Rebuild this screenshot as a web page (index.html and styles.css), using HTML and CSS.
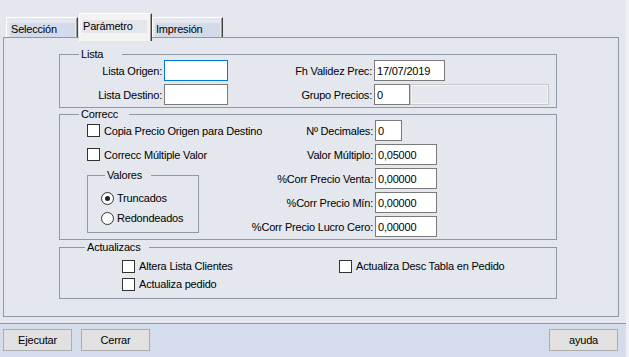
FILE: index.html
```html
<!DOCTYPE html>
<html lang="es">
<head>
    <meta charset="UTF-8">
    <title>Parámetro</title>
    <link rel="stylesheet" href="styles.css">
</head>
<body>
<div class="window">
    <!-- Pestañas -->
    <div class="tabs">
        <div class="tab tab-1"><span class="tab-label">Selección</span></div>
        <div class="tab tab-2 tab-active"><span class="tab-label">Parámetro</span></div>
        <div class="tab tab-3"><span class="tab-label">Impresión</span></div>
    </div>

    <div class="panel">
        <!-- Lista -->
        <div class="group group-lista">
            <div class="legend legend-lista">Lista</div>
            <div class="lista-grid">
                <label class="lbl">Lista Origen:</label>
                <input class="field field-focus" type="text" value="">
                <label class="lbl">Fh Validez Prec:</label>
                <input class="field w-fecha" type="text" value="17/07/2019">

                <label class="lbl">Lista Destino:</label>
                <input class="field" type="text" value="">
                <label class="lbl">Grupo Precios:</label>
                <div class="grupo">
                    <input class="field w-grupo" type="text" value="0">
                    <div class="disabled-box"></div>
                </div>
            </div>
        </div>

        <!-- Correcc -->
        <div class="group group-correcc">
            <div class="legend legend-correcc">Correcc</div>
            <div class="correcc-grid">
                <div class="check"><span class="box"></span>Copia Precio Origen para Destino</div>
                <label class="lbl">Nº Decimales:</label>
                <input class="field w-dec" type="text" value="0">

                <div class="check"><span class="box"></span>Correcc Múltiple Valor</div>
                <label class="lbl">Valor Múltiplo:</label>
                <input class="field w-num" type="text" value="0,05000">

                <div class="group group-valores">
                    <div class="legend legend-valores">Valores</div>
                    <div class="radio"><span class="dot dot-on"></span>Truncados</div>
                    <div class="radio"><span class="dot"></span>Redondeados</div>
                </div>
                <label class="lbl">%Corr Precio Venta:</label>
                <input class="field w-num" type="text" value="0,00000">

                <label class="lbl">%Corr Precio Mín:</label>
                <input class="field w-num" type="text" value="0,00000">

                <label class="lbl">%Corr Precio Lucro Cero:</label>
                <input class="field w-num" type="text" value="0,00000">
            </div>
        </div>

        <!-- Actualizacs -->
        <div class="group group-actual">
            <div class="legend legend-actual">Actualizacs</div>
            <div class="actual-grid">
                <div class="check"><span class="box"></span>Altera Lista Clientes</div>
                <div class="check"><span class="box"></span>Actualiza Desc Tabla en Pedido</div>
                <div class="check"><span class="box"></span>Actualiza pedido</div>
            </div>
        </div>
    </div>

    <!-- Botones -->
    <div class="footer">
        <button class="btn">Ejecutar</button>
        <button class="btn">Cerrar</button>
        <button class="btn btn-ayuda">ayuda</button>
    </div>
</div>
</body>
</html>
```

FILE: styles.css
```css
/* Ventana principal */
body {
    margin: 0;
    background-color: #eef0f4;
}

.window {
    width: 626px;
    height: 357px;
    background-color: #e4e7ee;
    font-family: 'Liberation Sans', Arial, sans-serif;
    font-size: 11px;
    letter-spacing: -0.2px;
    color: #000;
}

/* Pestañas */
.tabs {
    display: flex;
    align-items: flex-end;
    height: 37px;
    padding-left: 6px;
    box-sizing: border-box;
}

.tab {
    display: flex;
    height: 20px;
    box-sizing: border-box;
    border-top: 1px solid #fff;
    border-left: 1px solid #fff;
    border-right: 1px solid #404040;
    box-shadow: inset -1px 0 0 #a0a0a0;
    padding: 5px 2px 0 3px;
}

.tab-label {
    flex: 1;
    height: 14px;
    line-height: 13px;
    padding-left: 1px;
    background-color: #d3dbea;
}

.tab-1 { width: 72px; }

.tab-2 {
    width: 73px;
    margin-left: 1px;
}

.tab-3 {
    width: 71px;
    padding-left: 2px;
}

.tab-active {
    position: relative;
    z-index: 1;
    height: 28px;
    margin-bottom: -4px;
    padding: 6px 4px 0 2px;
    background-color: #f3f3f3;
}

.tab-active .tab-label {
    height: 13px;
    background-color: #e4e6eb;
}

/* Panel con los grupos */
.panel {
    width: 616px;
    height: 280px;
    margin-left: 3px;
    padding: 10px 0 0 55px;
    box-sizing: border-box;
    border: 1px solid #8f99a6;
}

.group {
    width: 498px;
    box-sizing: border-box;
    border: 1px solid #8f99a6;
}

.legend {
    width: max-content;
    height: 13px;
    line-height: 13px;
    margin: -7px 0 -1px 19px;
    padding: 0 2px;
    background-color: #e4e7ee;
}

.legend-lista { padding-right: 19px; }
.legend-correcc { padding-right: 11px; }

.group-lista {
    margin-top: 6px;
    padding-bottom: 2px;
}

.group-correcc {
    margin-top: 6px;
    padding-bottom: 2px;
}

.group-actual {
    margin-top: 7px;
    padding: 0 0 5px 62px;
}

.legend-actual {
    margin-left: -37px;
    padding-right: 9px;
}

/* Etiquetas y campos */
.lbl {
    display: flex;
    align-items: center;
    justify-content: flex-end;
    white-space: nowrap;
}

.field {
    width: 64px;
    height: 21px;
    margin: 0;
    padding: 0 0 0 2px;
    box-sizing: border-box;
    border: 1px solid #7a7a7a;
    background-color: #fff;
    font: inherit;
    letter-spacing: inherit;
    color: #000;
    outline: none;
}

.field-focus {
    border-color: #0078d7;
}

.w-fecha { width: 71px; }
.w-grupo { width: 36px; }
.w-dec { width: 27px; }
.w-num { width: 62px; }

.lista-grid {
    display: grid;
    grid-template-columns: 102px 64px 142px auto;
    grid-auto-rows: 21px;
    column-gap: 2px;
    row-gap: 3px;
}

.grupo {
    display: flex;
}

.disabled-box {
    width: 139px;
    height: 21px;
    box-sizing: border-box;
    border: 1px solid #c6c6c6;
    box-shadow: inset 0 0 0 1px #f4f4f4;
}

.correcc-grid {
    display: grid;
    grid-template-columns: 178px 133px auto;
    grid-auto-rows: 21px;
    column-gap: 2px;
    row-gap: 3px;
}

/* Casillas */
.check {
    display: flex;
    align-items: center;
    white-space: nowrap;
}

.correcc-grid .check {
    padding-left: 27px;
}

.box {
    flex-shrink: 0;
    width: 13px;
    height: 13px;
    margin-right: 4px;
    box-sizing: border-box;
    border: 1px solid #333;
    background-color: #fff;
}

/* Grupo Valores */
.group-valores {
    grid-row: 3 / span 3;
    align-self: start;
    width: 112px;
    margin: 7px 0 0 27px;
    padding: 7px 0 4px 13px;
}

.legend-valores {
    margin: -14px 0 6px 4px;
    padding-right: 9px;
}

.radio {
    display: flex;
    align-items: center;
    height: 20px;
}

.dot {
    position: relative;
    flex-shrink: 0;
    width: 13px;
    height: 13px;
    margin-right: 3px;
    box-sizing: border-box;
    border: 1px solid #333;
    border-radius: 50%;
    background-color: #fff;
}

.dot-on::after {
    content: '';
    position: absolute;
    left: 3px;
    top: 3px;
    width: 5px;
    height: 5px;
    border-radius: 50%;
    background-color: #222;
}

/* Actualizacs */
.actual-grid {
    display: grid;
    grid-template-columns: 217px auto;
    grid-auto-rows: 18px;
    padding-top: 4px;
}

/* Barra inferior */
.footer {
    display: flex;
    gap: 9px;
    height: 34px;
    margin-top: 6px;
    padding: 5px 8px 0 3px;
    box-sizing: border-box;
    border-top: 1px solid #8f99a6;
    background-color: #d5ddec;
}

.btn {
    width: 69px;
    height: 22px;
    padding: 0;
    border: 1px solid #adadad;
    background-color: #e1e1e1;
    font: inherit;
    letter-spacing: inherit;
    color: #000;
}

.btn-ayuda {
    margin-left: auto;
}
```
